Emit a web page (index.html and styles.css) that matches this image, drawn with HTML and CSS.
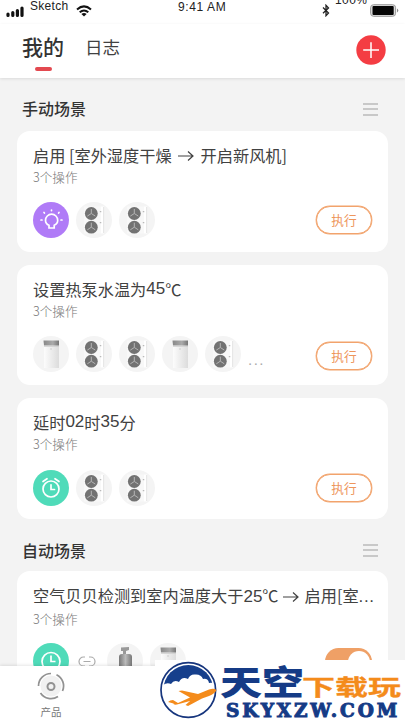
FILE: index.html
```html
<!DOCTYPE html>
<html lang="zh-CN">
<head>
<meta charset="utf-8">
<title>我的场景</title>
<link rel="stylesheet" href="styles.css">
</head>
<body>
<svg class="defs" width="0" height="0" aria-hidden="true">
  <defs>
    <linearGradient id="panel" x1="0" x2="1"><stop offset="0" stop-color="#888"/><stop offset=".6" stop-color="#aaa"/><stop offset="1" stop-color="#777"/></linearGradient>
    <linearGradient id="body" x1="0" x2="1"><stop offset="0" stop-color="#fcfcfc"/><stop offset="1" stop-color="#dcdcdc"/></linearGradient>
    <linearGradient id="tank" x1="0" x2="1"><stop offset="0" stop-color="#777"/><stop offset=".5" stop-color="#bbb"/><stop offset="1" stop-color="#777"/></linearGradient>
    <g id="fan"><circle r="6.4" fill="#727272"/><path d="M0-4.500V0L-4 2.600M0 0L4 2.600" fill="none" stroke="#b4b4b4" stroke-width="1"/></g>
    <symbol id="pump" viewBox="0 0 36 36"><circle cx="18" cy="18" r="18" fill="#f4f4f4"/><path d="M8 4.500H25V31.500H8Z" fill="#f8f8f8"/><path d="M25 4.500H28V31.500H25Z" fill="#fff"/><path d="M27.600 5V31" stroke="#ddd" stroke-width=".8"/><use href="#fan" x="15.300" y="11.500"/><use href="#fan" x="15.300" y="25.200"/><path d="M23.800 9.700h1.500M23.800 20.700h1.500" stroke="#aaa"/></symbol>
    <symbol id="heater" viewBox="0 0 36 36"><circle cx="18" cy="18" r="18" fill="#f4f4f4"/><path d="M11 5H26V32H11Z" fill="url(#body)"/><path d="M10.500 4.500H26V9.500H11Z" fill="url(#panel)"/><path d="M11 10.500H26" stroke="#ccc" stroke-width=".7"/><path d="M17 13h2" stroke="#bbb" stroke-width=".6"/></symbol>
    <symbol id="tankdev" viewBox="0 0 36 36"><circle cx="18" cy="18" r="18" fill="#f4f4f4"/><path d="M14 4.500L22 4V7L19 8V12H16V8H14Z" fill="#999"/><rect x="12" y="11" width="13" height="24" rx="3" fill="url(#tank)"/></symbol>
    <symbol id="alarm" viewBox="0 0 36 36"><circle cx="18" cy="18" r="18" fill="#4fdbb9"/><g fill="none" stroke="#fff" stroke-width="1.700" stroke-linecap="round"><circle cx="18" cy="19" r="8"/><path d="M18 14.800V19.500H21.500M10 11.500L14 8.700M22 8.700L26 11.500"/></g></symbol>
    <symbol id="clock" viewBox="0 0 36 36"><circle cx="18" cy="18" r="18" fill="#4fdbb9"/><g fill="none" stroke="#fff" stroke-width="1.700"><circle cx="18" cy="18.500" r="9"/><path d="M18 12.500V18.500H22.500"/></g></symbol>
    <symbol id="bulb" viewBox="0 0 36 36"><circle cx="18" cy="18" r="18" fill="#b07bf7"/><g fill="none" stroke="#fff" stroke-width="1.700" stroke-linecap="round"><path d="M16 26V23.300C13.500 22.400 12.500 20.600 12.500 18.300A6.100 6.100 0 0 1 24.700 18.300C24.700 20.600 23.500 22.400 21.200 23.300V26ZM18.500 8V8.600M11 10.500L11.400 11M26 10.500L25.600 11M8 18H9M28 18H29"/></g></symbol>
  </defs>
</svg>
<div class="app">
  <div class="status">
    <svg class="signal" width="20" height="13" viewBox="0 0 20 13"><path d="M2 9V10.500M6.800 7.500V10.500M11.400 5.500V10.500M16 3V10.500" stroke="#111" stroke-width="3.200" stroke-linecap="round"/></svg>
    <span class="carrier">Sketch</span>
    <svg class="wifi" width="16" height="12" viewBox="0 0 16 12"><g fill="none" stroke="#111" stroke-width="2"><path d="M1 4.500Q8-1.800 15 4.500M3.700 7.300Q8 3.600 12.300 7.300"/></g><path d="M5.400 9Q8 7 10.600 9L8 11.600Z" fill="#111"/></svg>
    <span class="time">9:41 AM</span>
    <svg class="bt" width="8" height="13" viewBox="0 0 8 13"><path d="M1 3.500L6.500 9L4 11.700V1.300L6.500 4L1 9.300" fill="none" stroke="#222" stroke-width="1.300"/></svg>
    <span class="percent">100%</span>
    <svg class="battery" width="29" height="13" viewBox="0 0 29 13"><rect x=".6" y=".7" width="25" height="11.600" rx="3" fill="#ddd" stroke="#999"/><rect x="2.500" y="2" width="21.200" height="9" rx="1" fill="#050505"/><path d="M27 4.500Q29.500 6.500 27 8.500Z" fill="#888"/></svg>
  </div>
  <header class="header">
    <div class="tab active">我的</div>
    <div class="tab">日志</div>
    <svg class="add" width="30" height="30" viewBox="0 0 30 30"><circle cx="15" cy="15" r="14.700" fill="#f43d43"/><path d="M7.200 15H23M15 7.200V23" stroke="#fff" stroke-width="1.500"/></svg>
  </header>
  <main class="content">
    <div class="section"><h2>手动场景</h2><i class="menu"></i></div>
    <section class="card">
      <h3><span>启用 [室外湿度干燥</span><svg class="arrow wide" width="16" height="12" viewBox="0 0 16 12"><path d="M0 6H15M10 1.500L15 6L10 10.500"/></svg><span>开启新风机]</span></h3>
      <p>3个操作</p>
      <div class="row"><svg><use href="#bulb"/></svg><svg><use href="#pump"/></svg><svg><use href="#pump"/></svg><button>执行</button></div>
    </section>
    <section class="card mid">
      <h3>设置热泵水温为<span class="num">45</span>℃</h3>
      <p>3个操作</p>
      <div class="row"><svg><use href="#heater"/></svg><svg><use href="#pump"/></svg><svg><use href="#pump"/></svg><svg><use href="#heater"/></svg><svg><use href="#pump"/></svg><span class="more">...</span><button>执行</button></div>
    </section>
    <section class="card third">
      <h3>延时<span class="num">02</span>时<span class="num">35</span>分</h3>
      <p>3个操作</p>
      <div class="row"><svg><use href="#alarm"/></svg><svg><use href="#pump"/></svg><svg><use href="#pump"/></svg><button>执行</button></div>
    </section>
    <div class="section second"><h2>自动场景</h2><i class="menu"></i></div>
    <section class="card last">
      <h3><span>空气贝贝检测到室内温度大于<span class="num">25</span>℃</span><svg class="arrow" width="16" height="12" viewBox="0 0 16 12"><path d="M0 6H15M10 1.500L15 6L10 10.500"/></svg><span>启用[室<span class="num dots">...</span></span></h3>
      <p>3个操作</p>
      <div class="row"><svg><use href="#clock"/></svg><svg class="link" viewBox="0 0 18 12"><path d="M7 1H5.500A4.500 4.500 0 0 0 5.500 10H7M11 1H12.500A4.500 4.500 0 0 1 12.500 10H11M5.500 5.500H12.500"/></svg><svg><use href="#tankdev"/></svg><svg><use href="#heater"/></svg><span class="toggle"></span></div>
    </section>
  </main>
  <nav class="tabbar">
    <div class="item">
      <svg width="28" height="28" viewBox="0 0 28 28"><circle cx="14" cy="14" r="10.500" fill="#f1f1f1"/><g fill="none" stroke="#929292" stroke-width="1.700"><path d="M1.500 14A12.500 12.500 0 0 1 14 1.500M19.500 2.700A12.500 12.500 0 0 1 25.500 19M21 24.500A12.500 12.500 0 0 1 3.500 21"/><circle cx="14" cy="14.500" r="3.500" stroke-width="2"/></g></svg>
      <span>产品</span>
    </div>
  </nav>
  <div class="brand">
    <svg width="250" height="60" viewBox="155 660 250 60">
      <clipPath id="disc"><circle cx="188.300" cy="690" r="25"/></clipPath>
      <circle cx="188.300" cy="690" r="27.300" fill="#fff" stroke="#16357d" stroke-width="1.700"/>
      <path clip-path="url(#disc)" d="M160 660H216V684Q212 682 209 683Q208 678 203 679Q201 674 195 674.500Q190 674 188 679Q182 676 179 682Q174 679 171 684Q167 682 163 685H160Z" fill="#163f8c"/>
      <path d="M168 702Q170 700 173 700L178 703L190 697.500L178.500 691L182 690.500L198 694L209 689.500Q214 688 216.500 690Q215 693.500 209 696L202 698.500L188 706L185.500 705L190 701L177 704.500Q173 705 173.500 703.500L168 702Z" fill="#f48b1b"/>
      <text class="sky" x="220" y="695" textLength="84" lengthAdjust="spacingAndGlyphs">天空</text>
      <text class="play" x="302" y="694.500" textLength="99" lengthAdjust="spacingAndGlyphs">下载玩</text>
      <text class="domain" x="226" y="717" textLength="174" lengthAdjust="spacingAndGlyphs">SKYXZW.COM</text>
    </svg>
  </div>
</div>
</body>
</html>
```
FILE: styles.css
```css
* { box-sizing: border-box; }
body { margin: 0; font-family: "Noto Sans CJK SC", sans-serif; color: #414141; }
.defs { position: absolute; }
.app { position: relative; width: 405px; height: 720px; overflow: hidden; background: #f3f3f3; }
.status { display: flex; align-items: flex-start; height: 24px; background: #fff; font-family: "Liberation Sans", sans-serif; font-size: 12px; line-height: 14px; color: #222; padding-left: 6px; }
.signal { margin-top: 5px; }
.carrier { width: 40px; margin: -1px 6px 0 4px; letter-spacing: .3px; }
.wifi { margin-top: 5px; }
.time { margin-left: 86px; width: 60px; letter-spacing: .6px; white-space: nowrap; }
.bt { margin: 4px 0 0 84px; }
.percent { margin: -7px 0 0 5px; width: 32px; letter-spacing: .4px; }
.battery { margin: 4px 0 0 3px; flex: none; }
.header { display: flex; height: 54px; padding: 5px 19px 0 22px; background: #fff; box-shadow: 0 1px 3px #0000001a; position: relative; }
.tab { font-size: 17.500px; line-height: 35px; margin-left: 21px; }
.tab.active { margin-left: 0; font-size: 21px; font-weight: 500; color: #333; }
.active::after { content: ""; display: block; width: 17px; height: 4px; margin: 3px auto 0; border-radius: 2px; background: #e34950; }
.add { margin: 6px 0 0 auto; }
.section { display: flex; justify-content: space-between; align-items: center; height: 53px; padding: 9px 27px 0 22px; }
.section.second { height: 52px; padding-top: 11px; }
h2 { margin: -2px 0 0; font-size: 16px; line-height: 24px; font-weight: 500; color: #333; }
.menu { width: 15px; height: 13px; background: linear-gradient(#c8c8c8 0 2px, transparent 2px 5.500px, #c8c8c8 5.500px 7.500px, transparent 7.500px 11px, #c8c8c8 11px); }
.card { width: 371px; height: 121px; margin: 0 0 13px 17px; padding: 12px 16px 0; border-radius: 13px; background: #fff; }
.card.mid { height: 120px; }
.card.mid button { margin-top: 4px; }
.card.third .row { margin-top: 16px; }
.card + .second { margin-top: -13px; }
h3 { display: flex; align-items: center; margin: 0; font-weight: 400; font-size: 16.200px; line-height: 24px; white-space: nowrap; color: #414141; }
.num { font-family: "Liberation Sans", sans-serif; font-size: 17px; }
.dots { letter-spacing: .6px; }
.arrow { margin: 1px 6px 0 4px; fill: none; stroke: #414141; stroke-width: 1.200; flex: none; }
.arrow.wide { margin: 1px 7px 0 6px; }
.card p { margin: 1px 0 0; font-size: 12.600px; line-height: 18px; font-weight: 300; color: #777; }
.row { display: flex; align-items: center; gap: 7px; margin-top: 16px; height: 36px; }
.card.third .row { margin-top: 17px; }
.last .row { margin-top: 15px; }
.row svg { width: 36px; height: 36px; flex: none; }
.row button { width: 56px; height: 28px; margin-left: auto; padding: 0; border: 1.500px solid #f2a36c; box-shadow: 0 0 0 .4px #f2a36c; border-radius: 14px; background: #fff; color: #ee965c; font: 12.700px/24px "Noto Sans CJK SC", sans-serif; }
.more { color: #aaa; font: 15px "Liberation Sans", sans-serif; letter-spacing: 1.500px; padding-top: 10px; }
.row .link { width: 18px; height: 12px; margin: 1px 4px 0 2px; fill: none; stroke: #aaa; stroke-width: 1.200; }
.toggle { display: flex; justify-content: flex-end; width: 47px; height: 27px; margin-left: auto; padding: 3px 2px; border-radius: 14px; background: #efa066; }
.toggle::after { content: ""; width: 22px; height: 22px; border-radius: 50%; background: #fff; }
.tabbar { position: absolute; bottom: 0; left: 0; width: 100%; height: 54px; background: #fff; box-shadow: 0 -1px 3px #0000001a; }
.item { display: flex; flex-direction: column; align-items: center; width: 102px; padding-top: 6px; font-size: 10.500px; line-height: 16px; color: #777; }
.item span { margin-top: 4px; }
.brand { position: absolute; right: 0; bottom: 0; width: 250px; height: 60px; background: #fff; }
.brand svg { display: block; }
.sky { font-size: 34px; font-weight: 900; fill: #153b86; }
.play { font-size: 21.500px; font-weight: 700; fill: #f48b1b; stroke: #f48b1b; stroke-width: .3; }
.domain { font: bold 18px "DejaVu Serif", serif; font-stretch: condensed; letter-spacing: 2.500px; fill: #153b86; stroke: #153b86; stroke-width: .9; }
```
